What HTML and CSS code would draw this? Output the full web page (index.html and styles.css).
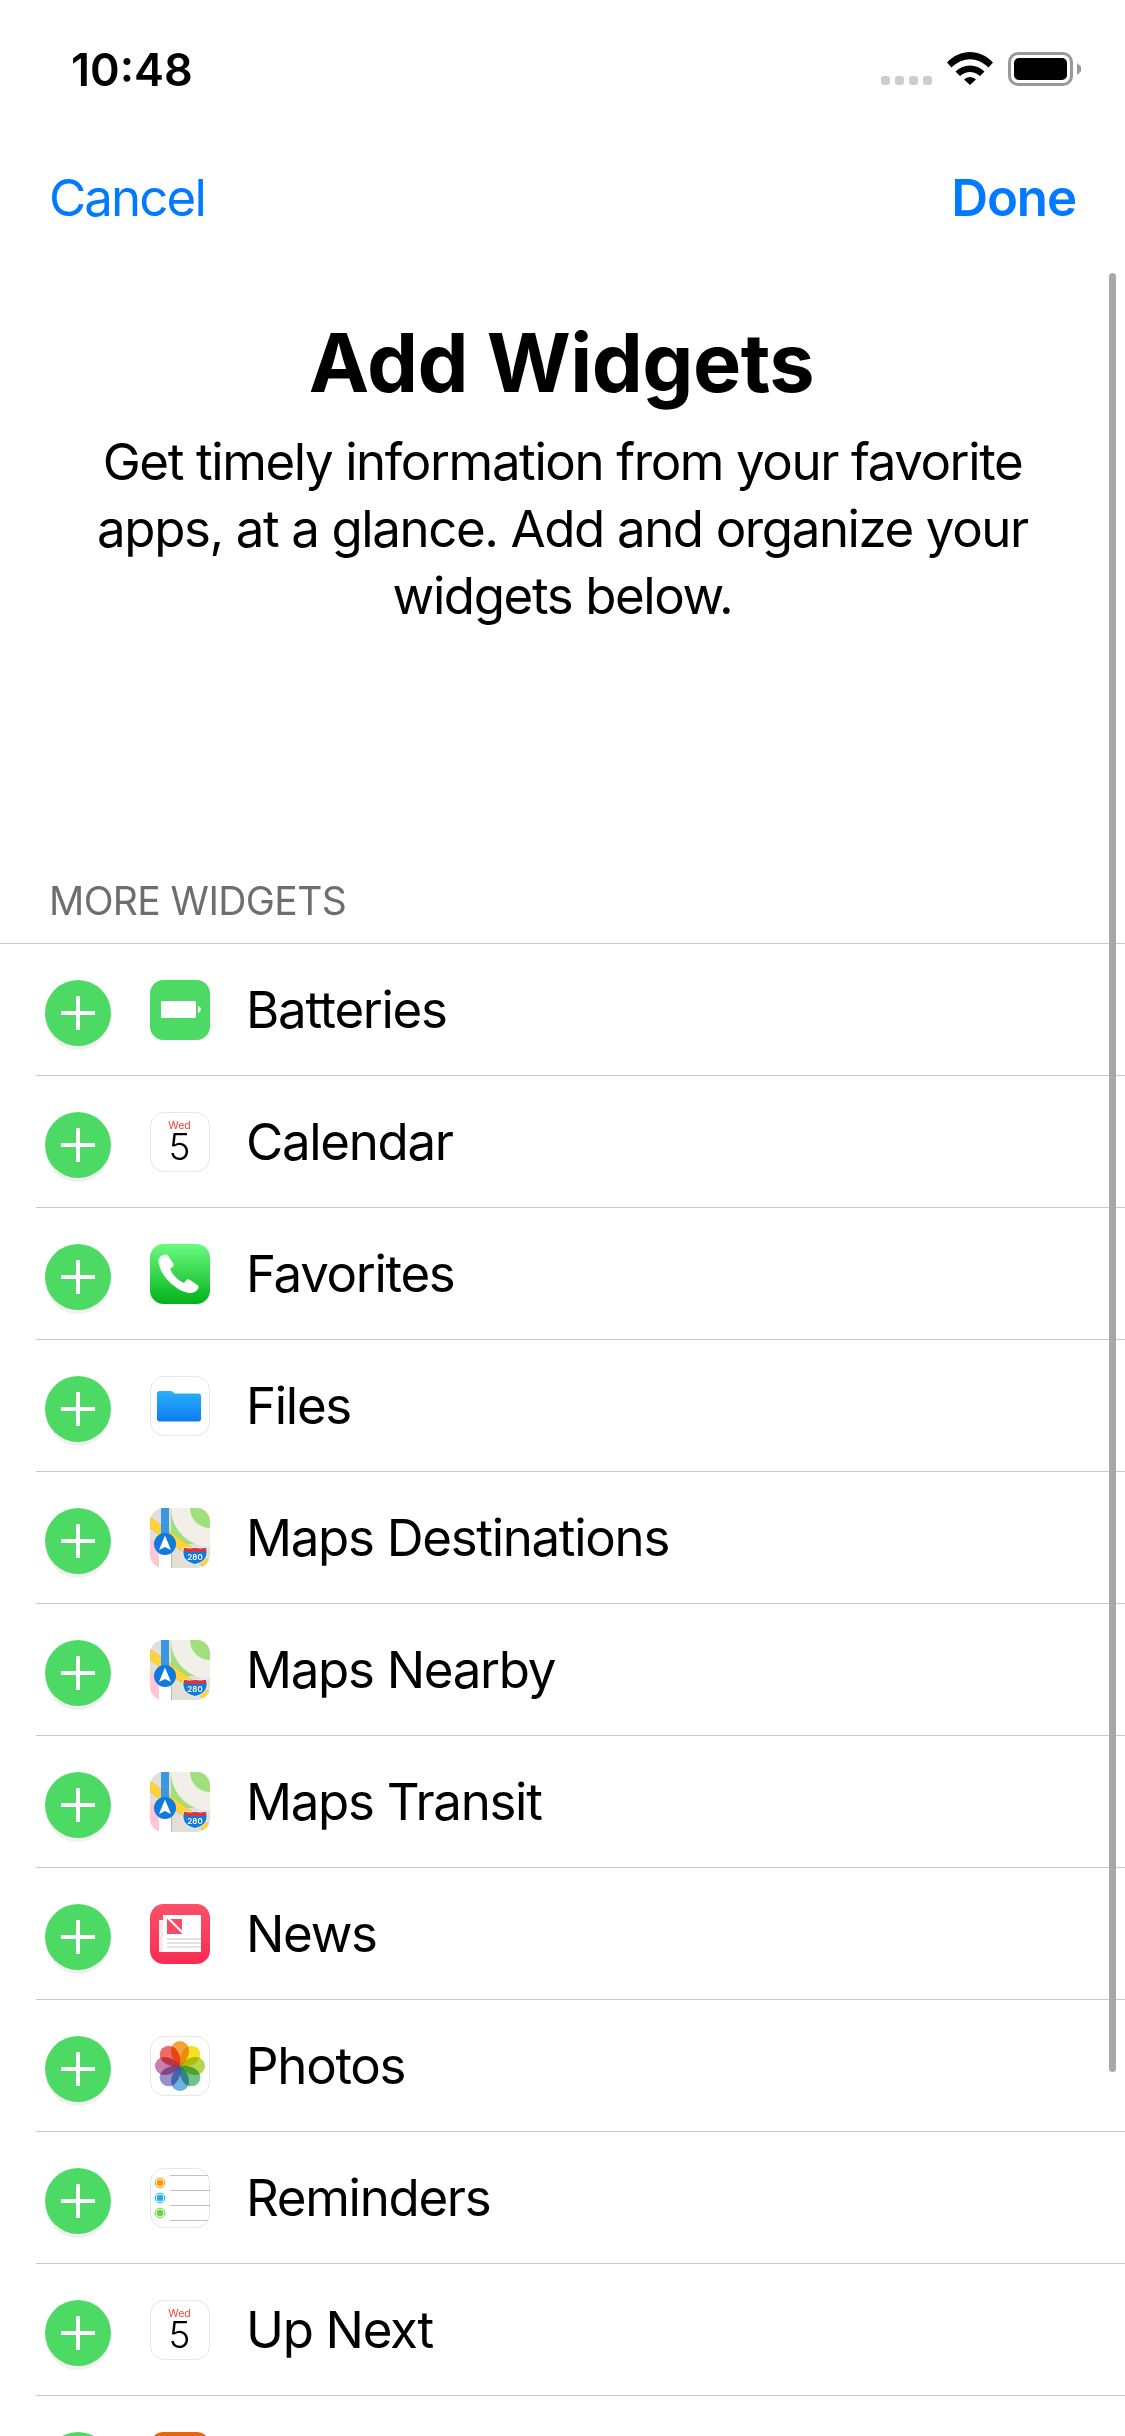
FILE: index.html
```html
<!DOCTYPE html>
<html lang="en">
<head>
<meta charset="utf-8">
<title>Add Widgets</title>
<link rel="stylesheet" href="styles.css">
</head>
<body>
<svg class="defs" width="0" height="0" aria-hidden="true">
  <defs>
    <linearGradient id="gPhone" x1="0" y1="0" x2="0" y2="1"><stop offset="0" stop-color="#6afb80"/><stop offset="1" stop-color="#03b21a"/></linearGradient>
    <linearGradient id="gNews" x1="0" y1="0" x2="0" y2="1"><stop offset="0" stop-color="#fc5069"/><stop offset="1" stop-color="#f92c54"/></linearGradient>
    <linearGradient id="gFolder" x1="0" y1="0" x2="0" y2="1"><stop offset="0" stop-color="#2cb0f7"/><stop offset="1" stop-color="#0b7df0"/></linearGradient>
    <clipPath id="clipIcon"><rect width="60" height="60" rx="13.5"/></clipPath>
    <path id="petal" d="M30 30C23 25 21 19 21 14a9 9 0 0 1 18 0c0 5-2 11-9 16z"/>

    <symbol id="i-calendar" viewBox="0 0 60 60">
      <rect x=".5" y=".5" width="59" height="59" rx="13.5" fill="#fff" stroke="#e6e6e6"/>
      <text class="cal-day" x="29.500" y="17.300" text-anchor="middle">Wed</text>
      <text class="cal-num" x="29.500" y="48" text-anchor="middle">5</text>
    </symbol>

    <symbol id="i-maps" viewBox="0 0 60 60">
      <g clip-path="url(#clipIcon)">
        <rect width="60" height="60" fill="#e2dfd6"/>
        <rect x="21" width="39" height="36" fill="#9fe07c"/>
        <circle cx="60" cy="0" r="39" fill="#f2efe9"/>
        <circle cx="60" cy="0" r="20" fill="#9fe07c"/>
        <path d="M0 9L60 53V63L0 20z" fill="#fed43a" stroke="#f2b63c" stroke-width=".6"/>
        <path d="M0 30L9 38V60H0z" fill="#fdc7d3"/>
        <rect x="9" y="30" width="12" height="30" fill="#fff"/>
        <rect x="21" y="32" width="1" height="28" fill="#bdb9ae"/>
        <rect x="11" width="8" height="30" fill="#3b96e4"/>
        <circle cx="15" cy="36" r="11" fill="#0f7adb"/>
        <path d="M15 27.5L21 42L15 39L9 42z" fill="#fff"/>
        <path d="M34 39.500c4 1 7 1 11 0c4 1 8 1 11-.5c2 5 1 10-2 13c-3 3-6 3.500-9 4.500c-3-1-6-1.500-9-4.500c-3-3-4-8-2-13z" fill="#0f7adb" stroke="#fff" stroke-width=".8"/>
        <path d="M34.500 40c4 1 7 1 10.500 0c4 1 7 1 10.500 0l.5 4H34z" fill="#e0313a"/>
        <text class="shield" x="45" y="52" text-anchor="middle">280</text>
      </g>
    </symbol>

    <symbol id="i-photos" viewBox="0 0 60 60">
      <rect x=".5" y=".5" width="59" height="59" rx="13.500" fill="#fff" stroke="#e6e6e6"/>
      <use class="petal" href="#petal" fill="#f5a23c" transform="rotate(0 30 30)"/>
      <use class="petal" href="#petal" fill="#f8e022" transform="rotate(45 30 30)"/>
      <use class="petal" href="#petal" fill="#b6d54e" transform="rotate(90 30 30)"/>
      <use class="petal" href="#petal" fill="#70c090" transform="rotate(135 30 30)"/>
      <use class="petal" href="#petal" fill="#6cb1e2" transform="rotate(180 30 30)"/>
      <use class="petal" href="#petal" fill="#9b90c9" transform="rotate(225 30 30)"/>
      <use class="petal" href="#petal" fill="#c880b0" transform="rotate(270 30 30)"/>
      <use class="petal" href="#petal" fill="#ef6b64" transform="rotate(315 30 30)"/>
    </symbol>

    <symbol id="i-reminders" viewBox="0 0 60 60">
      <rect x=".5" y=".5" width="59" height="59" rx="13.500" fill="#fff" stroke="#e6e6e6"/>
      <path d="M20 7.500H58M20 22.500H60M20 37.500H60M20 52.500H58" stroke="#c0c0c0" stroke-width="1"/>
      <circle cx="10" cy="15" r="3.200" fill="#ff9500"/>
      <circle cx="10" cy="15" r="4.800" fill="none" stroke="#ff9500" stroke-width="1"/>
      <circle cx="10" cy="30" r="3.200" fill="#1badf8"/>
      <circle cx="10" cy="30" r="4.800" fill="none" stroke="#1badf8" stroke-width="1"/>
      <circle cx="10" cy="45" r="3.200" fill="#63da38"/>
      <circle cx="10" cy="45" r="4.800" fill="none" stroke="#63da38" stroke-width="1"/>
    </symbol>
  </defs>
</svg>

<header class="status">
  <span class="time">10:48</span>
  <div class="status-right">
    <div class="dots"><i></i><i></i><i></i><i></i></div>
    <svg class="wifi" width="46" height="33" viewBox="0 0 46 33">
      <path d="M0 10.500C13-3.500 33-3.500 46 10.500L41.500 15.500C30 4.500 16 4.500 4.500 15.500z"/>
      <path d="M8.500 19.500C16.500 11.500 29.500 11.500 37.500 19.500L33 24C26.500 18.500 19.500 18.500 13 24z"/>
      <path d="M17 27.500C20.500 24 25.500 24 29 27.500L23 33z"/>
    </svg>
    <div class="battery"><div class="battery-fill"></div></div>
  </div>
</header>

<nav class="nav">
  <span class="nav-btn">Cancel</span>
  <span class="nav-btn nav-done">Done</span>
</nav>

<main>
  <section class="intro">
    <h1 class="title">Add Widgets</h1>
    <p class="lead">Get timely information from your favorite apps, at a glance. Add and organize your widgets below.</p>
  </section>

  <h2 class="section-head">MORE WIDGETS</h2>

  <ul class="list">
    <li class="row"><span class="add"></span>
      <span class="icon"><svg width="60" height="60" viewBox="0 0 60 60"><rect width="60" height="60" rx="13.500" fill="#4cd964"/><rect x="11" y="21" width="35" height="17" rx="1.500" fill="#fff"/><path d="M48 26l2 1.200c1 .7 1 3.600 0 4.300l-2 1.500z" fill="#fff"/></svg></span>
      <span class="label">Batteries</span></li>
    <li class="row"><span class="add"></span>
      <span class="icon"><svg width="60" height="60"><use href="#i-calendar"/></svg></span>
      <span class="label">Calendar</span></li>
    <li class="row"><span class="add"></span>
      <span class="icon"><svg width="60" height="60" viewBox="0 0 60 60"><rect width="60" height="60" rx="13.500" fill="url(#gPhone)"/><path d="M13 11.500c2-1.500 4-1.500 5 0l5 7.500c1 1.500.7 3-.5 4l-2.500 2c1.500 3 3.500 6 6 8.500c2.500 2.500 5 4 8 5.500l2-2.500c1-1.300 2.500-1.500 4-.5l7.500 5c1.500 1 1.500 3 0 4.500c-2 2.500-4.500 4-8 3.500c-7-1-14-5-20-11c-6-6-10-13-11-20c-.5-3 1-5.500 4.500-7z" fill="#fff"/></svg></span>
      <span class="label">Favorites</span></li>
    <li class="row"><span class="add"></span>
      <span class="icon"><svg width="60" height="60" viewBox="0 0 60 60"><rect x=".5" y=".5" width="59" height="59" rx="13.500" fill="#fff" stroke="#e6e6e6"/><path d="M7 17.500c0-1.500 1-2.500 2.500-2.500h11c1.500 0 2 .5 3 1.500l1 1h24c1.500 0 2.500 1 2.500 2.500v23c0 1.500-1 2.500-2.500 2.500h-39c-1.500 0-2.500-1-2.500-2.500z" fill="url(#gFolder)"/></svg></span>
      <span class="label">Files</span></li>
    <li class="row"><span class="add"></span>
      <span class="icon"><svg width="60" height="60"><use href="#i-maps"/></svg></span>
      <span class="label">Maps Destinations</span></li>
    <li class="row"><span class="add"></span>
      <span class="icon"><svg width="60" height="60"><use href="#i-maps"/></svg></span>
      <span class="label">Maps Nearby</span></li>
    <li class="row"><span class="add"></span>
      <span class="icon"><svg width="60" height="60"><use href="#i-maps"/></svg></span>
      <span class="label">Maps Transit</span></li>
    <li class="row"><span class="add"></span>
      <span class="icon"><svg width="60" height="60" viewBox="0 0 60 60"><rect width="60" height="60" rx="13.500" fill="url(#gNews)"/><rect x="9" y="16" width="4" height="32" fill="#ececec"/><rect x="13" y="11" width="38" height="37" rx=".5" fill="#fff"/><rect x="17" y="15" width="15" height="15" fill="#fc4a66"/><path d="M18 14L33 29" stroke="#fff" stroke-width="2.200"/><path d="M17 35H51M17 39H51M17 43H51" stroke="#c6c6c6"/></svg></span>
      <span class="label">News</span></li>
    <li class="row"><span class="add"></span>
      <span class="icon"><svg width="60" height="60"><use href="#i-photos"/></svg></span>
      <span class="label">Photos</span></li>
    <li class="row"><span class="add"></span>
      <span class="icon"><svg width="60" height="60"><use href="#i-reminders"/></svg></span>
      <span class="label">Reminders</span></li>
    <li class="row"><span class="add"></span>
      <span class="icon"><svg width="60" height="60"><use href="#i-calendar"/></svg></span>
      <span class="label">Up Next</span></li>
    <li class="row"><span class="add"></span>
      <span class="icon icon-orange"></span></li>
  </ul>
</main>

<div class="scrollbar"></div>
</body>
</html>
```

FILE: styles.css
```css
* { box-sizing: border-box; margin: 0; padding: 0; }

html, body {
  width: 1125px;
  height: 2436px;
  overflow: hidden;
  background: #fff;
}

body {
  position: relative;
  font-family: Inter, "Liberation Sans", sans-serif;
  color: #000;
}

.defs { position: absolute; }

.status {
  height: 138px;
  padding: 0 52px 0 71px;
  display: flex;
  justify-content: space-between;
  align-items: center;
}

.time {
  font-size: 45px;
  font-weight: 600;
}

.status-right {
  display: flex;
  align-items: flex-start;
  height: 34px;
}

.dots {
  display: flex;
  gap: 5px;
  margin: 24px 15px 0 0;
}

.dots i {
  width: 9px;
  height: 9px;
  border-radius: 3px;
  background: #cdcdcd;
}

.wifi { display: block; margin-right: 15px; fill: #000; }

.battery {
  position: relative;
  width: 65px;
  height: 34px;
  padding: 3px;
  border: 3px solid #999;
  border-radius: 10px;
}

.battery::after {
  content: "";
  position: absolute;
  top: 8px;
  right: -11px;
  width: 4px;
  height: 12px;
  background: #999;
  clip-path: polygon(0 0, 100% 30%, 100% 70%, 0 100%);
}

.battery-fill {
  height: 100%;
  border-radius: 5px;
  background: #000;
}

.nav {
  height: 118px;
  padding: 0 49px;
  display: flex;
  justify-content: space-between;
  align-items: center;
  font-size: 51px;
  letter-spacing: -1.9px;
  color: #007aff;
}

.nav-done { font-weight: 600; letter-spacing: -1.1px; }

.intro {
  height: 624px;
  padding: 59px 60px 0;
  text-align: center;
}

.title {
  padding-right: 2px;
  font-size: 81px;
  font-weight: 700;
  line-height: 96px;
  letter-spacing: -0.5px;
}

.lead {
  margin-top: 17px;
  font-size: 51px;
  line-height: 67px;
  font-weight: 400;
  letter-spacing: -1.4px;
}

.section-head {
  height: 42px;
  padding-left: 49px;
  font-size: 39px;
  font-weight: 400;
  line-height: 42px;
  letter-spacing: -0.6px;
  color: #6d6d72;
}

.list {
  list-style: none;
  margin-top: 21px;
  border-top: 1px solid #c8c7cc;
}

.row {
  height: 132px;
  margin-left: 36px;
  padding-left: 9px;
  display: flex;
  align-items: center;
  border-bottom: 1px solid #c8c7cc;
}

.add {
  position: relative;
  flex: none;
  width: 66px;
  height: 66px;
  margin-top: 6px;
  margin-right: 39px;
  border-radius: 50%;
  background: #4cd964;
  box-shadow: 0 5px 0 -1px #f0f0f0;
}

.add::before,
.add::after {
  content: "";
  position: absolute;
  background: #fff;
}

.add::before { left: 16px; top: 31px; width: 34px; height: 4px; }
.add::after { left: 31px; top: 16px; width: 4px; height: 34px; }

.icon {
  flex: none;
  display: block;
  width: 60px;
  height: 60px;
  margin-right: 36px;
  border-radius: 13.5px;
}

.icon svg { display: block; }

.icon-orange { background: #e8650c; }

.label { font-size: 51px; letter-spacing: -1.3px; }

.cal-day {
  font-family: Inter, "Liberation Sans", sans-serif;
  font-size: 10.500px;
  fill: #ff3b30;
}

.cal-num {
  font-family: Inter, "Liberation Sans", sans-serif;
  font-size: 37px;
  font-weight: 300;
  fill: #000;
}

.shield {
  font-family: Inter, "Liberation Sans", sans-serif;
  font-size: 8px;
  font-weight: 600;
  fill: #fff;
}

.petal { mix-blend-mode: multiply; }

.scrollbar {
  position: absolute;
  left: 1109px;
  top: 273px;
  width: 7px;
  height: 1799px;
  border-radius: 4px;
  background: #a8a8a8;
}
```
